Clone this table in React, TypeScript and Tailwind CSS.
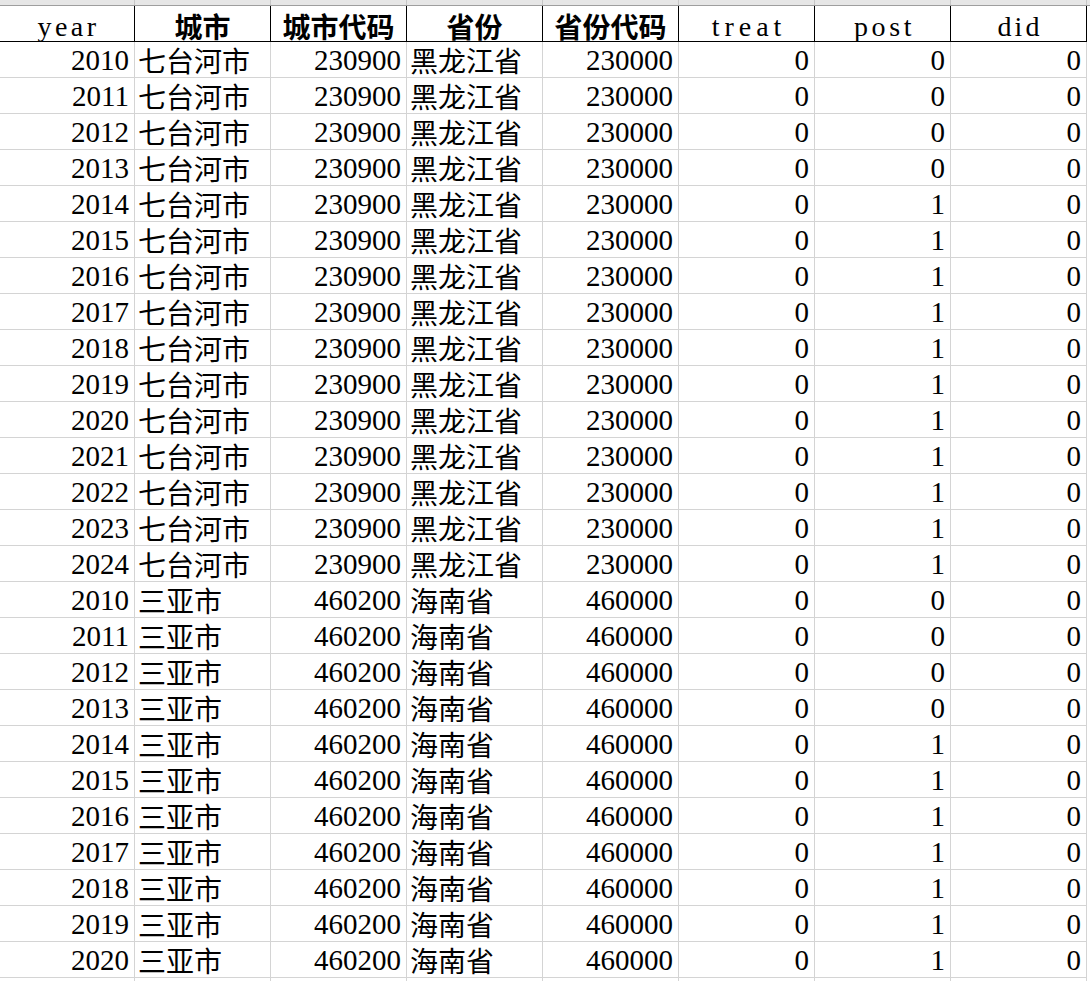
import React from "react";

type Row = { y: number; city: string; cc: string; prov: string; pc: string; post: number };

const rows: Row[] = [];
for (let y = 2010; y <= 2024; y++) rows.push({ y, city: "七台河市", cc: "230900", prov: "黑龙江省", pc: "230000", post: y >= 2014 ? 1 : 0 });
for (let y = 2010; y <= 2020; y++) rows.push({ y, city: "三亚市", cc: "460200", prov: "海南省", pc: "460000", post: y >= 2014 ? 1 : 0 });

const widths = ["w-[135px]", "w-[136px]", "w-[136px]", "w-[136px]", "w-[136px]", "w-[136px]", "w-[136px]", "w-[136px]"];

const num = "font-['Liberation_Serif',serif] text-[29px]";
const cjk = "font-['Noto_Sans_CJK_SC',sans-serif] text-[28px]";

function DataCell({ w, children, align, font }: { w: string; children: React.ReactNode; align: "l" | "r"; font: string }) {
  return (
    <div
      className={`${w} shrink-0 h-[36px] border-r border-b border-[#d4d4d4] flex items-end whitespace-nowrap ${align === "r" ? "justify-end pr-[5px]" : "justify-start pl-[3px]"} pb-[1px] leading-[32px] text-black ${font}`}
    >
      {children}
    </div>
  );
}

function HeadCell({ w, children, latin, track }: { w: string; children: React.ReactNode; latin?: boolean; track?: string }) {
  return (
    <div
      className={`${w} shrink-0 h-[36px] border-r border-b border-black flex items-end justify-center whitespace-nowrap text-black ${
        latin
          ? `font-['Liberation_Serif',serif] font-medium text-[28px] leading-[28px] pb-0 ${track ?? ""}`
          : "font-['Noto_Sans_CJK_SC',sans-serif] font-bold text-[28px] leading-[30px] pb-0"
      }`}
    >
      {children}
    </div>
  );
}

export default function App() {
  return (
    <div className="w-[1090px] h-[981px] overflow-hidden bg-white">
      <div className="flex h-[6px] bg-[#e6e6e6] border-b border-[#9e9e9e]">
        {widths.map((w, i) => (
          <div key={i} className={`${w} shrink-0 border-r border-[#c6c6c6]`} />
        ))}
      </div>
      <div className="flex">
        <HeadCell w={widths[0]} latin track="tracking-[3.5px] pl-[3px]">year</HeadCell>
        <HeadCell w={widths[1]}>城市</HeadCell>
        <HeadCell w={widths[2]}>城市代码</HeadCell>
        <HeadCell w={widths[3]}>省份</HeadCell>
        <HeadCell w={widths[4]}>省份代码</HeadCell>
        <HeadCell w={widths[5]} latin track="tracking-[5px] pl-[5px]">treat</HeadCell>
        <HeadCell w={widths[6]} latin track="tracking-[3.6px] pl-[4px]">post</HeadCell>
        <HeadCell w={widths[7]} latin track="tracking-[3px] pl-[3px]">did</HeadCell>
      </div>
      {rows.map((r, i) => (
        <div key={i} className="flex">
          <DataCell w={widths[0]} align="r" font={num}>{r.y}</DataCell>
          <DataCell w={widths[1]} align="l" font={cjk}>{r.city}</DataCell>
          <DataCell w={widths[2]} align="r" font={num}>{r.cc}</DataCell>
          <DataCell w={widths[3]} align="l" font={cjk}>{r.prov}</DataCell>
          <DataCell w={widths[4]} align="r" font={num}>{r.pc}</DataCell>
          <DataCell w={widths[5]} align="r" font={num}>0</DataCell>
          <DataCell w={widths[6]} align="r" font={num}>{r.post}</DataCell>
          <DataCell w={widths[7]} align="r" font={num}>0</DataCell>
        </div>
      ))}
      <div className="flex">
        {widths.map((w, i) => (
          <div key={i} className={`${w} shrink-0 h-[36px] border-r border-[#d4d4d4]`} />
        ))}
      </div>
    </div>
  );
}
